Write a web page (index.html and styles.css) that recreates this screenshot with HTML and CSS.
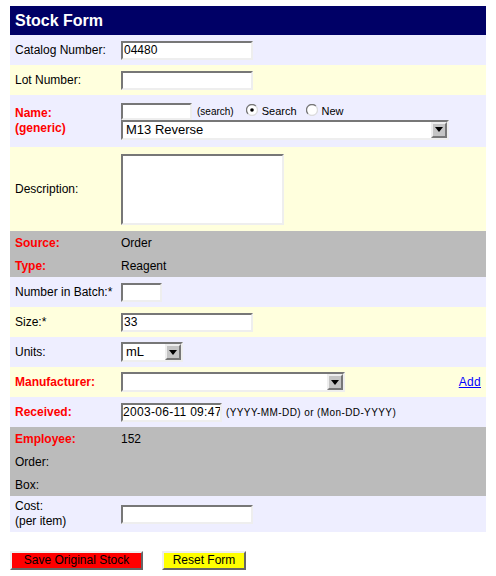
FILE: index.html
```html
<!DOCTYPE html>
<html>
<head>
<meta charset="utf-8">
<title>Stock Form</title>
<link rel="stylesheet" href="styles.css">
</head>
<body>
<form class="stock-form">
<table class="form-table">
  <colgroup><col class="c-label"><col class="c-value"></colgroup>
  <tr class="hdr"><td colspan="2">Stock Form</td></tr>
  <tr class="row lav"><td class="lbl">Catalog Number:</td><td><input class="txt w132" type="text" value="04480"></td></tr>
  <tr class="row yel"><td class="lbl">Lot Number:</td><td><input class="txt w132" type="text" value=""></td></tr>
  <tr class="row-name lav">
    <td class="lbl req two">Name:<br>(generic)</td>
    <td>
      <div class="name-line">
        <input class="txt name-input" type="text" value="">
        <span class="small search-hint">(search)</span>
        <svg class="radio r-first" width="12" height="12" viewBox="0 0 12 12"><circle cx="6" cy="6" r="5" fill="#fff"/><path d="M2.1 9.9 A5.5 5.5 0 0 1 9.9 2.1" fill="none" stroke="#777" stroke-width="1.3"/><path d="M9.9 2.1 A5.5 5.5 0 0 1 2.1 9.9" fill="none" stroke="#ddd" stroke-width="1.3"/><circle cx="6" cy="6" r="1.8" fill="#000"/></svg>
        <span class="opt">Search</span>
        <svg class="radio r-second" width="12" height="12" viewBox="0 0 12 12"><circle cx="6" cy="6" r="5" fill="#fff"/><path d="M2.1 9.9 A5.5 5.5 0 0 1 9.9 2.1" fill="none" stroke="#777" stroke-width="1.3"/><path d="M9.9 2.1 A5.5 5.5 0 0 1 2.1 9.9" fill="none" stroke="#ddd" stroke-width="1.3"/></svg>
        <span class="opt">New</span>
      </div>
      <div class="select sel-name"><span class="sel-text">M13 Reverse</span><span class="sel-btn"><svg width="8" height="5" viewBox="0 0 8 5"><path d="M0 0H8L4 5Z" fill="#000"/></svg></span></div>
    </td>
  </tr>
  <tr class="row-desc yel"><td class="lbl">Description:</td><td><textarea class="desc"></textarea></td></tr>
  <tr class="row-info gray"><td class="lbl req">Source:</td><td>Order</td></tr>
  <tr class="row-info gray"><td class="lbl req">Type:</td><td>Reagent</td></tr>
  <tr class="row lav"><td class="lbl">Number in Batch:*</td><td><input class="txt w41" type="text" value=""></td></tr>
  <tr class="row yel"><td class="lbl">Size:*</td><td><input class="txt w132" type="text" value="33"></td></tr>
  <tr class="row lav"><td class="lbl">Units:</td><td><div class="select sel-units"><span class="sel-text">mL</span><span class="sel-btn"><svg width="8" height="5" viewBox="0 0 8 5"><path d="M0 0H8L4 5Z" fill="#000"/></svg></span></div></td></tr>
  <tr class="row yel"><td class="lbl req">Manufacturer:</td><td><div class="val-flex"><div class="select sel-manu"><span class="sel-text"></span><span class="sel-btn"><svg width="8" height="5" viewBox="0 0 8 5"><path d="M0 0H8L4 5Z" fill="#000"/></svg></span></div><a class="add" href="#">Add</a></div></td></tr>
  <tr class="row lav"><td class="lbl req">Received:</td><td><div class="recv"><input class="txt w101 date-input" type="text" value="2003-06-11 09:47"><span class="small date-hint">(YYYY-MM-DD) or (Mon-DD-YYYY)</span></div></td></tr>
  <tr class="row-info gray"><td class="lbl req">Employee:</td><td>152</td></tr>
  <tr class="row-info gray"><td class="lbl">Order:</td><td></td></tr>
  <tr class="row-info gray"><td class="lbl">Box:</td><td></td></tr>
  <tr class="row-cost lav"><td class="lbl two">Cost:<br>(per item)</td><td><input class="txt w132" type="text" value=""></td></tr>
</table>
<div class="actions">
  <button type="button" class="btn btn-red">Save Original Stock</button>
  <button type="reset" class="btn btn-yellow">Reset Form</button>
</div>
</form>
</body>
</html>
```
FILE: styles.css
```css
body {
  margin: 6px 10px;
  background: #fff;
  font-family: "Liberation Sans", Arial, sans-serif;
  font-size: 12px;
  color: #000;
}
.stock-form { margin: 0; }
.form-table {
  width: 476px;
  border-collapse: collapse;
  border-spacing: 0;
  table-layout: fixed;
}
.c-label { width: 106px; }
.form-table td {
  padding: 0 5px;
  vertical-align: middle;
}
.hdr td {
  height: 29px;
  background: #000066;
  color: #fff;
  font-weight: bold;
  font-size: 16px;
}
.lav td { background: #eeeeff; }
.yel td { background: #ffffdd; }
.gray td { background: #bbbbbb; }
.row td { height: 30px; }
.row-name td { height: 52px; }
.row-desc td { height: 84px; }
.row-info td { height: 23px; }
.row-cost td { height: 36px; }
.lbl { white-space: nowrap; }
.req { color: #ff0000; font-weight: bold; }
.two { line-height: 15px; }

.txt {
  display: block;
  box-sizing: border-box;
  height: 19px;
  margin: 0;
  padding: 0 0 0 1px;
  border: 2px solid;
  border-color: #777 #eee #eee #777;
  background: #fff;
  font-family: "Liberation Sans", Arial, sans-serif;
  font-size: 12px;
  color: #000;
  outline: none;
}
.w132 { width: 132px; }
.w41 { width: 41px; }
.w101 { width: 101px; }
.date-input { padding-left: 0; letter-spacing: 0.3px; }

.name-line {
  display: flex;
  align-items: center;
  height: 17px;
}
.name-input { width: 71px; height: 17px; }
.small { font-size: 10px; }
.search-hint { margin-left: 5px; }
.radio { display: block; flex: none; margin-top: -3px; }
.r-first { margin-left: 12px; }
.r-second { margin-left: 9px; }
.opt { font-size: 11px; margin-left: 4px; }

.select {
  display: flex;
  box-sizing: border-box;
  height: 20px;
  border: 2px solid;
  border-color: #777 #eee #eee #777;
  background: #fff;
}
.sel-text {
  flex: 1;
  padding-left: 3px;
  font-size: 13px;
  line-height: 16px;
  white-space: nowrap;
  overflow: hidden;
}
.sel-btn {
  flex: none;
  width: 16px;
  box-sizing: border-box;
  background: #c4c4c4;
  border: 2px solid;
  border-color: #eee #777 #777 #eee;
  display: flex;
  align-items: center;
  justify-content: center;
}
.sel-name { width: 328px; }
.sel-units { width: 62px; }
.sel-manu { width: 224px; }

.val-flex {
  display: flex;
  align-items: center;
  justify-content: space-between;
}
.add {
  color: #0000ff;
  text-decoration: underline;
  font-size: 12px;
  letter-spacing: 0.3px;
}
.recv {
  display: flex;
  align-items: center;
}
.date-hint { margin-left: 4px; letter-spacing: 0.4px; }

.desc {
  display: block;
  box-sizing: border-box;
  width: 163px;
  height: 71px;
  margin: 0;
  padding: 0;
  border: 2px solid;
  border-color: #777 #eee #eee #777;
  background: #fff;
  resize: none;
  outline: none;
}

.actions {
  margin-top: 19px;
  display: flex;
  gap: 19px;
}
.btn {
  box-sizing: border-box;
  height: 19px;
  margin: 0;
  padding: 0;
  border: 2px solid;
  border-color: #eee #666 #666 #eee;
  font-family: "Liberation Sans", Arial, sans-serif;
  font-size: 12px;
  color: #000;
  line-height: 15px;
}
.btn-red { width: 133px; background: #ff0000; }
.btn-yellow { width: 84px; background: #ffff00; }
```
